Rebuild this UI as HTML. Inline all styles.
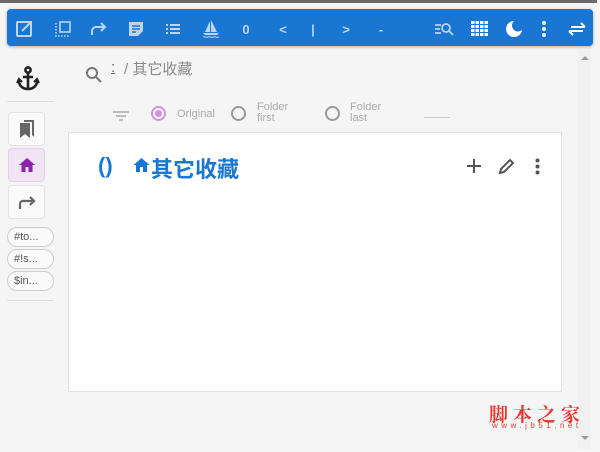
<!DOCTYPE html>
<html><head><meta charset="utf-8"><style>
*{margin:0;padding:0;box-sizing:border-box}
body{width:600px;height:452px;background:#f5f5f5;position:relative;overflow:hidden;font-family:"Liberation Sans","Noto Sans CJK SC",sans-serif}
.a{position:absolute}
.tb{left:7px;top:9px;width:586px;height:37px;background:#1976d2;border-radius:4px;box-shadow:0 1px 3px rgba(0,0,0,.3)}
.ic{position:absolute;top:9px;width:22px;height:22px;margin-left:-11px;display:flex;align-items:center;justify-content:center;color:#bcd5f2;font-weight:bold;font-size:13px}
.btn{left:8px;width:37px;height:34px;border:1px solid #e3e3e3;border-radius:4px;background:#fafafa;display:flex;align-items:center;justify-content:center}
.chip{left:7px;width:47px;height:20px;border:1px solid #ccc;border-radius:10px;font-size:11px;color:#555;padding-left:6px;line-height:18px;background:#fafafa}
.rad{width:15px;height:15px;border:2px solid #888;border-radius:50%}
.lbl{font-size:11px;color:#aaa;line-height:11px}
</style></head><body>
<div class="a" style="left:0;top:0;width:597px;height:3px;background:#6a6a6a"></div>
<div class="a tb">
 <div class="ic" style="left:17px"><svg width="18" height="18" viewBox="0 0 18 18" fill="none" stroke="#bcd5f2" stroke-width="2"><rect x="2" y="2" width="14" height="14" rx="1"/><path d="M7 11L15 3M10 2h6v6" /></svg></div>
 <div class="ic" style="left:56px"><svg width="18" height="18" viewBox="0 0 18 18" fill="none" stroke="#bcd5f2" stroke-width="1.6"><rect x="6" y="2" width="10" height="10"/><path d="M2 3v13h13" stroke-dasharray="1.5 1.5"/></svg></div>
 <div class="ic" style="left:91px"><svg width="18" height="18" viewBox="0 0 18 18" fill="none" stroke="#bcd5f2" stroke-width="2"><path d="M3 15V11a4 4 0 0 1 4-4h9M12 3l4 4-4 4"/></svg></div>
 <div class="ic" style="left:129px"><svg width="18" height="18" viewBox="0 0 18 18"><path d="M2 2h14v9l-5 5H2z" fill="#bcd5f2"/><path d="M5 6h8M5 9h8M5 12h4" stroke="#1976d2" stroke-width="1.5"/></svg></div>
 <div class="ic" style="left:166px"><svg width="18" height="18" viewBox="0 0 18 18" stroke="#bcd5f2" stroke-width="2"><path d="M2 5h2M6 5h10M2 9h2M6 9h10M2 13h2M6 13h10"/></svg></div>
 <div class="ic" style="left:204px"><svg width="20" height="20" viewBox="0 0 20 20" fill="#bcd5f2"><path d="M9 2L4 13h5zM10 1v12h6z"/><path d="M2 14h16l-2 2H4z"/><path d="M2 18c2-1 3 1 5 0s3 1 5 0 3 1 6 0" stroke="#bcd5f2" fill="none"/></svg></div>
 <div class="ic" style="left:239px">0</div>
 <div class="ic" style="left:276px">&lt;</div>
 <div class="ic" style="left:306px">|</div>
 <div class="ic" style="left:339px">&gt;</div>
 <div class="ic" style="left:374px">-</div>
 <div class="ic" style="left:437px"><svg width="20" height="18" viewBox="0 0 20 18" fill="none" stroke="#bcd5f2" stroke-width="1.8"><path d="M1 5h6M1 9h5M1 13h6"/><circle cx="12" cy="8" r="4"/><path d="M15 11l4 4"/></svg></div>
 <div class="ic" style="left:473px"><svg width="18" height="16" viewBox="0 0 18 16" fill="#fff"><rect x="0" y="0" width="3.5" height="3"/><rect x="4.5" y="0" width="3.5" height="3"/><rect x="9" y="0" width="3.5" height="3"/><rect x="13.5" y="0" width="3.5" height="3"/><rect x="0" y="4" width="3.5" height="3"/><rect x="4.5" y="4" width="3.5" height="3"/><rect x="9" y="4" width="3.5" height="3"/><rect x="13.5" y="4" width="3.5" height="3"/><rect x="0" y="8" width="3.5" height="3"/><rect x="4.5" y="8" width="3.5" height="3"/><rect x="9" y="8" width="3.5" height="3"/><rect x="13.5" y="8" width="3.5" height="3"/><rect x="0" y="12" width="3.5" height="3"/><rect x="4.5" y="12" width="3.5" height="3"/><rect x="9" y="12" width="3.5" height="3"/><rect x="13.5" y="12" width="3.5" height="3"/></svg></div>
 <div class="ic" style="left:507px"><svg width="20" height="20" viewBox="0 0 20 20"><path d="M10 2a8 8 0 1 0 8 9 6 6 0 1 1-8-9z" fill="#fff"/></svg></div>
 <div class="ic" style="left:537px"><svg width="6" height="18" viewBox="0 0 6 18" fill="#fff"><circle cx="3" cy="3" r="2"/><circle cx="3" cy="9" r="2"/><circle cx="3" cy="15" r="2"/></svg></div>
 <div class="ic" style="left:570px"><svg width="20" height="18" viewBox="0 0 20 18" fill="none" stroke="#fff" stroke-width="2"><path d="M4 7h14M14 3l4 4M16 11H2M6 15l-4-4"/></svg></div>
</div>
<div class="a" style="left:578px;top:50px;width:13px;height:399px;background:#f0f0f0"></div>
<div class="a" style="left:581px;top:56px;width:0;height:0;border:4px solid transparent;border-bottom:4px solid #999;border-top:0"></div>
<div class="a" style="left:581px;top:436px;width:0;height:0;border:4px solid transparent;border-top:4px solid #999;border-bottom:0"></div>
<div class="a" style="left:16px;top:66px"><svg width="24" height="26" viewBox="0 0 24 26" fill="none" stroke="#222" stroke-width="2.6"><circle cx="12" cy="4" r="2.6"/><path d="M12 7v17M7 11h10M3 15c0 5 4 8 9 8s9-3 9-8"/><path d="M1 17l2-4 3 3M23 17l-2-4-3 3" stroke-width="2"/></svg></div>
<div class="a" style="left:7px;top:101px;width:47px;height:1px;background:#ddd"></div>
<div class="a btn" style="top:112px"><svg width="18" height="20" viewBox="0 0 18 20" fill="#666"><path d="M6 1h10v17l-2-2V3H6z"/><path d="M2 4h10v15l-5-4-5 4z"/></svg></div>
<div class="a btn" style="top:148px;background:#f1e4f5;border-color:#e5d0ec"><svg width="18" height="16" viewBox="0 0 18 16" fill="#8e24aa"><path d="M9 1L1 8h2.5v7h4v-5h3v5h4V8H17z"/></svg></div>
<div class="a btn" style="top:185px"><svg width="18" height="16" viewBox="0 0 18 16" fill="none" stroke="#666" stroke-width="2.2"><path d="M2 15V10a3 3 0 0 1 3-3h11M12 3l4 4-4 4"/></svg></div>
<div class="a chip" style="top:227px">#to...</div>
<div class="a chip" style="top:249px">#!s...</div>
<div class="a chip" style="top:271px">$in...</div>
<div class="a" style="left:7px;top:300px;width:47px;height:1px;background:#ddd"></div>
<div class="a" style="left:85px;top:66px"><svg width="18" height="18" viewBox="0 0 18 18" fill="none" stroke="#777" stroke-width="2"><circle cx="7" cy="7" r="5"/><path d="M11 11l5 5"/></svg></div>
<div class="a" style="left:111px;top:59px;font-size:15px;color:#666;text-decoration:underline">:</div>
<div class="a" style="left:124px;top:58px;font-size:15px;color:#8a8a8a">/ 其它收藏</div>
<div class="a" style="left:113px;top:109px"><svg width="16" height="12" viewBox="0 0 16 12" stroke="#aaa" stroke-width="1.5"><path d="M0 2h16M3 6h10M6 10h4"/></svg></div>
<div class="a rad" style="left:151px;top:106px;border-color:#cf94dc;padding:2px"><div style="width:7px;height:7px;border-radius:50%;background:#cf94dc"></div></div>
<div class="a lbl" style="left:177px;top:109px">Original</div>
<div class="a rad" style="left:231px;top:106px;border-color:#999"></div>
<div class="a lbl" style="left:257px;top:102px">Folder<br>first</div>
<div class="a rad" style="left:325px;top:106px;border-color:#999"></div>
<div class="a lbl" style="left:350px;top:102px">Folder<br>last</div>
<div class="a" style="left:424px;top:117px;width:26px;height:1px;background:#ccc"></div>
<div class="a" style="left:68px;top:132px;width:494px;height:260px;background:#fff;border:1px solid #e2e2e2"></div>
<div class="a" style="left:98px;top:153px;font-size:22px;color:#1976d2;font-weight:bold">()</div>
<div class="a" style="left:132px;top:157px"><svg width="19" height="16" viewBox="0 0 18 16" fill="#1976d2"><path d="M9 1L1 8h2.5v7h4v-5h3v5h4V8H17z"/></svg></div>
<div class="a" style="left:151px;top:152px;font-size:22px;color:#1976d2;font-weight:bold">其它收藏</div>
<div class="a" style="left:467px;top:159px"><svg width="14" height="14" viewBox="0 0 14 14" stroke="#555" stroke-width="2"><path d="M7 0v14M0 7h14"/></svg></div>
<div class="a" style="left:498px;top:158px"><svg width="17" height="17" viewBox="0 0 17 17" fill="none" stroke="#555" stroke-width="2"><path d="M2 15l1-4L12 2l3 3-9 9z"/></svg></div>
<div class="a" style="left:535px;top:158px"><svg width="5" height="17" viewBox="0 0 5 17" fill="#555"><circle cx="2.5" cy="2.5" r="2"/><circle cx="2.5" cy="8.5" r="2"/><circle cx="2.5" cy="14.5" r="2"/></svg></div>
<div class="a" style="left:489px;top:400px;font-size:19px;color:#e53935;letter-spacing:5px;font-family:'Noto Serif CJK SC',serif;font-weight:bold">脚本之家</div>
<div class="a" style="left:492px;top:421px;font-size:8px;color:#e53935;letter-spacing:3.5px">www.jb51.net</div>
</body></html>
